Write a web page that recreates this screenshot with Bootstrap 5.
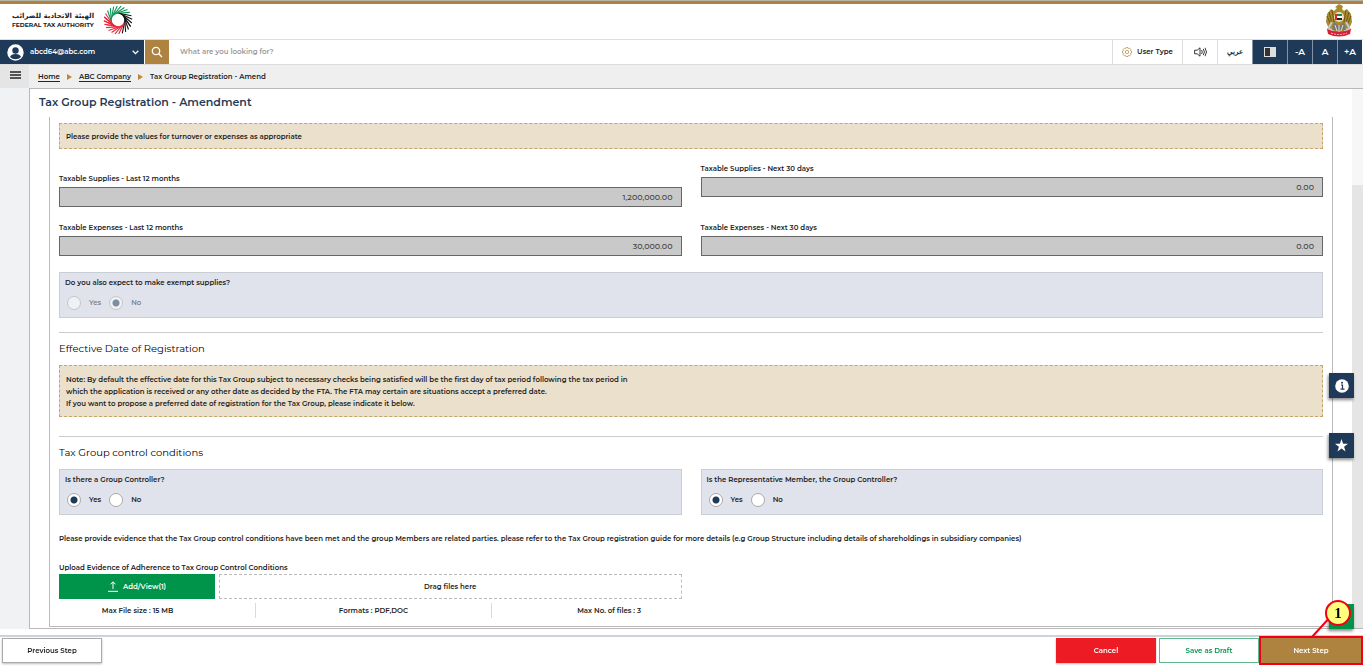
<!DOCTYPE html>
<html lang="en">
<head>
<meta charset="utf-8">
<meta name="viewport" content="width=device-width, initial-scale=1">
<title>Tax Group Registration - Amendment</title>
<link href="https://cdn.jsdelivr.net/npm/bootstrap@5.3.0/dist/css/bootstrap.min.css" rel="stylesheet">
<style>
:root{--navy:#1f3a58;--gold:#ad833f;--green:#00934a}
body{font-family:Montserrat,"Open Sans",sans-serif;font-size:7px;line-height:12px;font-weight:600;color:#222;background:#fff}
button,input{font:inherit;color:inherit}
a{color:inherit}
svg{display:block;flex:none}
.topline{border-top:1px solid #b5b5ac;height:4px;background:var(--gold)}
.brandbar{height:35px;padding:0 10px 3px 12px}
.brand-name{width:87px}
.brand-ar{font-family:"DejaVu Sans",sans-serif;font-size:7px;line-height:9px;font-weight:700}
.brand-en{font-size:6px;line-height:8px;font-weight:700;white-space:nowrap}
.toolbar{height:26px;border-top:1px solid #ddd;border-bottom:1px solid #ddd;padding-right:1px}
.toolbar button{border:0;border-radius:0;padding:0}
.account{width:144px;background:var(--navy);color:#fff;padding:0 5px 0 7px!important;gap:6px}
.finder{width:24px;background:var(--gold);margin-left:1px}
.searchbox{border:0;outline:0;padding:0 11px;min-width:0}
.searchbox::placeholder{color:#999;opacity:1}
.toolbar .tool{background:#fff;border-left:1px solid #ddd;gap:5px}
.toolbar .dark{background:var(--navy);color:#fff;border-left-color:#8393a5}
.w-type{width:70px}.w-icon{width:35px}.w-letter{width:25px}
.letter{font-size:9px}
.rail{width:29px;background:#f1f2f4;flex:none}
.rail button{height:23px;background:#e5e5e5;border:0;border-radius:0;padding:0 0 4px 2px}
.crumbs{height:23px;background:#efefef;padding:0 9px;gap:7px}
.crumbs a{text-decoration:underline;text-underline-offset:2px}
.sheet{border:1px solid #b9b9b9;border-right:0}
.page-title{font-size:11px;line-height:16px;font-weight:600;color:var(--navy);margin:0;padding:5px 9px 7px}
.track{width:11px;background:#f7f7f7;flex:none;padding-top:96px}
.thumb{background:#e5e5e5;height:100%}
.panel{border:1px solid #bbb;border-top:0;margin:0 19px;padding:6px 9px 8px}
.row{--bs-gutter-x:19px}
.notice{background:#ebe0cc;border:1px dashed #c8a468;padding:7px 6px 5px}
.notice.long{padding:8px 6px 6px}
.group-a{padding-top:14px}
.group-b{padding-top:15px}
.field label{display:block;margin-bottom:2px}
.lower{margin-top:10px}
.amount{height:20px;width:100%;border:1px solid #666;border-radius:0;background:#c9c9c9;text-align:right;padding:0 8px;font-size:8px;font-weight:500;color:#444;display:block}
.question{background:#e0e3eb;border:1px solid #c9cdd4;padding:4px 5px;height:46px}
.choice{margin:7px 0 0 2px;gap:8px}
.question input{appearance:none;width:14px;height:14px;border:1px solid #aaa;border-radius:50%;background:#fff;margin:0}
.question input:checked{background:radial-gradient(circle,var(--navy) 0 3px,#fff 4px)}
.off{opacity:.5}
.rule{border-top:1px solid #ccc;margin-top:14px}
.rule.wide{margin-top:19px}
.section{font-size:10px;line-height:14px;font-weight:400;color:#000;margin:9px 0}
.evidence{margin:18px 0 17px}
.upload{width:156px;height:25px;background:var(--green);color:#fff;border:0;border-radius:0;gap:5px;flex:none;padding:0}
.drop{border:1px dashed #bbb;height:25px;margin-left:4px}
.limits{padding-top:4px;margin:0 -45px 0 -39px}
.limits>div{height:15px;line-height:15px;text-align:center}
.limits>div+div{border-left:1px solid #d5dbe3}
.floaty{position:fixed;right:9px;width:25px;height:25px;background:var(--navy);border:0;box-shadow:-1px 2px 3px #0007;padding:0}
.f-info{top:373px}.f-star{top:433px}
.f-go{bottom:37px;background:var(--green)}
.footbar{border-top:2px solid #cdd2d8;padding:1px 2px 3px;height:31px;margin-top:6px;position:relative}
.footbar button{width:100px;height:25px;border-radius:0;padding:0}
.back{background:#fff;border:1px solid #aaa;box-shadow:0 1px 2px #0004}
.cancel{background:#ed1c24;color:#fff;border:0;box-shadow:0 1px 2px #0004}
.draft{background:#fff;color:var(--green);border:1px solid #5fb98c;margin-left:3px}
.next{background:var(--gold);color:#fff;border:0;margin-left:2px;outline:2px solid #f00012}
.callout{position:absolute;right:9px;bottom:28px}
.callout text{font:700 15px "Liberation Serif",serif}
</style>
</head>
<body class="d-flex flex-column min-vh-100">
<svg width="0" height="0" class="position-absolute" aria-hidden="true">
  <defs>
    <path id="blade" d="M-5.500 -4L3 -13.800" stroke-width="1.100"/>
    <g id="fan"><use href="#blade"/><use href="#blade" transform="rotate(15)"/><use href="#blade" transform="rotate(30)"/><use href="#blade" transform="rotate(45)"/></g>
  </defs>
</svg>
<div class="topline"></div>
<header class="brandbar d-flex align-items-center justify-content-between">
  <div class="d-flex align-items-center gap-1">
    <div class="brand-name">
      <div class="brand-ar" lang="ar">الهيئة الاتحادية للضرائب</div>
      <div class="brand-en">FEDERAL TAX AUTHORITY</div>
    </div>
    <svg width="30" height="30" viewBox="-15 -15 30 30" fill="none" aria-label="Federal Tax Authority">
      <g stroke="#0a9a55"><use href="#fan" transform="rotate(-60)"/><use href="#fan" transform="rotate(0)"/></g>
      <g stroke="#151515"><use href="#fan" transform="rotate(60)"/><use href="#fan" transform="rotate(105)"/></g>
      <g stroke="#ee2438"><use href="#fan" transform="rotate(165)"/><use href="#fan" transform="rotate(225)"/><use href="#fan" transform="rotate(240)"/></g>
    </svg>
  </div>
  <svg width="28" height="33" viewBox="0 0 28 33" aria-label="UAE emblem">
    <path d="M10 3l4-3 4 2-1 3 2 2 3-2 4 5 1 8-3 7-5 3H9l-5-3-3-7 1-8 4-5 3 2 3-3z" fill="#a98a2c"/>
    <path d="M4 8l3 11M2 12l4 9M7 6l2 12M24 8l-3 11M26 12l-4 9M21 6l-2 12" stroke="#6d5516" fill="none"/>
    <path d="M7 18l-4 7 6 1M21 18l4 7-6 1" stroke="#c9c9c9" stroke-width="2" fill="none"/>
    <path d="M9 18l5 4 5-4 2 8H7z" fill="#777"/><path d="M10 21l2 6M14 21v7M18 21l-2 6" stroke="#ddd"/>
    <circle cx="14" cy="13" r="5" fill="#e8dfbd"/><path d="M11 10v6" stroke="#e02530" stroke-width="2"/><path d="M12 10h5v2h-5z" fill="#138b4c"/><path d="M12 12h5v2h-5z" fill="#fff"/><path d="M12 14h5v2h-5z" fill="#222"/>
    <path d="M2 25q12 6 24 0l-1 5q-11 5-22 0z" fill="#d51f35"/><path d="M6 29q8 3 16 0" stroke="#f5b9bd" stroke-dasharray="2 1" fill="none"/>
  </svg>
</header>
<nav class="toolbar d-flex align-items-stretch">
  <button class="account d-flex align-items-center" type="button">
    <svg width="17" height="17" viewBox="0 0 17 17"><circle cx="8.500" cy="8.500" r="8.200" fill="#fff"/><circle cx="8.500" cy="6.500" r="3.200" fill="#1f3a58"/><path d="M3 13q1-3 5.500-3t5.500 3q-2 2.300-5.500 2.300T3 13" fill="#1f3a58"/></svg>
    <span>abcd64@abc.com</span>
    <svg class="ms-auto" width="7" height="5" viewBox="0 0 7 5"><path d="M.7.8l2.800 2.800L6.300.8" fill="none" stroke="#fff" stroke-width="1.300"/></svg>
  </button>
  <button class="finder d-flex align-items-center justify-content-center" type="button" aria-label="Search">
    <svg width="12" height="12" viewBox="0 0 12 12" fill="none" stroke="#fff" stroke-width="1.300"><circle cx="5" cy="5" r="3.700"/><path d="M7.700 7.700L11 11"/></svg>
  </button>
  <input class="searchbox flex-fill" type="search" placeholder="What are you looking for?" aria-label="Search">
  <button class="tool w-type d-flex align-items-center justify-content-center" type="button">
    <svg width="10" height="10" viewBox="0 0 10 10" fill="none" stroke="#b8935a" stroke-width=".8"><circle cx="5" cy="5" r="1.700"/><path d="M4 .6h2l.4 1.100 1.200-.5 1.300 1.300-.5 1.100 1.100.4v2l-1.100.4.5 1.200-1.300 1.300-1.200-.5L6 9.500H4l-.4-1.100-1.200.5-1.300-1.300.5-1.200L.5 6V4l1.100-.4-.5-1.100 1.300-1.300 1.200.5z"/></svg>
    <span>User Type</span>
  </button>
  <button class="tool w-icon d-flex align-items-center justify-content-center" type="button" aria-label="Listen">
    <svg width="13" height="10" viewBox="0 0 13 10" fill="none" stroke="#222" stroke-width=".9"><path d="M.6 3.200h2.600L6 .8v8.400L3.200 6.800H.6zM7.600 3q1.300 2 0 4M9.300 1.900q2.200 3.100 0 6.200M11 .8q3 4.200 0 8.400"/></svg>
  </button>
  <button class="tool w-icon" type="button" lang="ar">عربي</button>
  <button class="tool dark w-icon d-flex align-items-center justify-content-center" type="button" aria-label="Contrast">
    <svg width="12" height="10"><path d="M0 0h12v10H0z" fill="#ddd"/><path d="M1 1h5v8H1z" fill="#333"/></svg>
  </button>
  <button class="tool dark w-letter letter" type="button">-A</button>
  <button class="tool dark w-letter letter" type="button">A</button>
  <button class="tool dark w-letter letter" type="button">+A</button>
</nav>
<div class="d-flex flex-fill">
  <aside class="rail">
    <button class="w-100 d-flex align-items-center justify-content-center" type="button" aria-label="Menu">
      <svg width="11" height="8"><path d="M0 1h11M0 4h11M0 7h11" stroke="#222" stroke-width="1.500"/></svg>
    </button>
  </aside>
  <div class="flex-fill d-flex flex-column">
    <div class="crumbs d-flex align-items-center">
      <a href="#">Home</a>
      <svg width="5" height="6"><path d="M0 0l5 3-5 3z" fill="#b8883c"/></svg>
      <a href="#">ABC Company</a>
      <svg width="5" height="6"><path d="M0 0l5 3-5 3z" fill="#b8883c"/></svg>
      <span>Tax Group Registration - Amend</span>
    </div>
    <div class="sheet d-flex flex-fill">
      <main class="flex-fill">
        <h1 class="page-title">Tax Group Registration - Amendment</h1>
        <section class="panel">
          <div class="notice">Please provide the values for turnover or expenses as appropriate</div>
          <div class="row group-a">
            <div class="col-6">
              <div class="field lower"><label for="s12">Taxable Supplies - Last 12 months</label><input class="amount" id="s12" value="1,200,000.00" readonly></div>
            </div>
            <div class="col-6">
              <div class="field"><label for="s30">Taxable Supplies - Next 30 days</label><input class="amount" id="s30" value="0.00" readonly></div>
            </div>
          </div>
          <div class="row group-b">
            <div class="col-6 field"><label for="e12">Taxable Expenses - Last 12 months</label><input class="amount" id="e12" value="30,000.00" readonly></div>
            <div class="col-6 field"><label for="e30">Taxable Expenses - Next 30 days</label><input class="amount" id="e30" value="0.00" readonly></div>
          </div>
          <div class="question mt-3">
            <div>Do you also expect to make exempt supplies?</div>
            <div class="choice off d-flex align-items-center">
              <input type="radio" name="exempt" id="ex-y" disabled><label for="ex-y">Yes</label>
              <input type="radio" name="exempt" id="ex-n" checked disabled><label for="ex-n">No</label>
            </div>
          </div>
          <div class="rule"></div>
          <h2 class="section">Effective Date of Registration</h2>
          <div class="notice long">Note: By default the effective date for this Tax Group subject to necessary checks being satisfied will be the first day of tax period following the tax period in<br>which the application is received or any other date as decided by the FTA. The FTA may certain are situations accept a preferred date.<br>If you want to propose a preferred date of registration for the Tax Group, please indicate it below.</div>
          <div class="rule wide"></div>
          <h2 class="section">Tax Group control conditions</h2>
          <div class="row">
            <div class="col-6"><div class="question">
              <div>Is there a Group Controller?</div>
              <div class="choice d-flex align-items-center">
                <input type="radio" name="gc" id="gc-y" checked><label for="gc-y">Yes</label>
                <input type="radio" name="gc" id="gc-n"><label for="gc-n">No</label>
              </div>
            </div></div>
            <div class="col-6"><div class="question">
              <div>Is the Representative Member, the Group Controller?</div>
              <div class="choice d-flex align-items-center">
                <input type="radio" name="rm" id="rm-y" checked><label for="rm-y">Yes</label>
                <input type="radio" name="rm" id="rm-n"><label for="rm-n">No</label>
              </div>
            </div></div>
          </div>
          <p class="evidence">Please provide evidence that the Tax Group control conditions have been met and the group Members are related parties. please refer to the Tax Group registration guide for more details (e.g Group Structure including details of shareholdings in subsidiary companies)</p>
          <div class="row"><div class="col-6">
            <div>Upload Evidence of Adherence to Tax Group Control Conditions</div>
            <div class="d-flex">
              <button class="upload d-flex align-items-center justify-content-center" type="button">
                <svg width="10" height="11" viewBox="0 0 10 11" fill="none" stroke="#fff"><path d="M5 8V1M2.500 3.300L5 .8l2.500 2.500M0 10.300h10"/></svg>
                <span>Add/View(1)</span>
              </button>
              <div class="drop flex-fill d-flex align-items-center justify-content-center">Drag files here</div>
            </div>
            <div class="limits d-flex">
              <div class="flex-fill w-100">Max File size : 15 MB</div>
              <div class="flex-fill w-100">Formats : PDF,DOC</div>
              <div class="flex-fill w-100">Max No. of files : 3</div>
            </div>
          </div></div>
        </section>
      </main>
      <div class="track"><div class="thumb"></div></div>
    </div>
  </div>
</div>
<button class="floaty f-info d-flex align-items-center justify-content-center" type="button" aria-label="Information">
  <svg width="14" height="14"><circle cx="7" cy="7" r="6.800" fill="#fff"/><path d="M6 6h1.500v4M5.500 10.200h4" stroke="#1f3a58" stroke-width="1.200" fill="none"/><circle cx="7" cy="3.700" r="1" fill="#1f3a58"/></svg>
</button>
<button class="floaty f-star d-flex align-items-center justify-content-center" type="button" aria-label="Favourite">
  <svg width="13" height="13" viewBox="0 0 13 13"><path d="M6.500 0l1.600 4.700H13L9.100 7.700l1.400 4.800-4-2.900-4 2.900 1.400-4.800L0 4.700h4.900z" fill="#fff"/></svg>
</button>
<button class="floaty f-go" type="button" aria-label="Go"></button>
<footer class="footbar d-flex align-items-center">
  <button class="back" type="button">Previous Step</button>
  <button class="cancel ms-auto" type="button">Cancel</button>
  <button class="draft" type="button">Save as Draft</button>
  <button class="next" type="button">Next Step</button>
  <svg class="callout" width="44" height="39" viewBox="0 0 44 39" aria-label="Step 1"><path d="M2 38L22 16" stroke="#f00012" stroke-width="2"/><circle cx="28" cy="14" r="12" fill="#ffff80" stroke="#f00012" stroke-width="2"/><text x="28" y="19" text-anchor="middle">1</text></svg>
</footer>
<script src="https://cdn.jsdelivr.net/npm/bootstrap@5.3.0/dist/js/bootstrap.bundle.min.js"></script>
</body>
</html>
